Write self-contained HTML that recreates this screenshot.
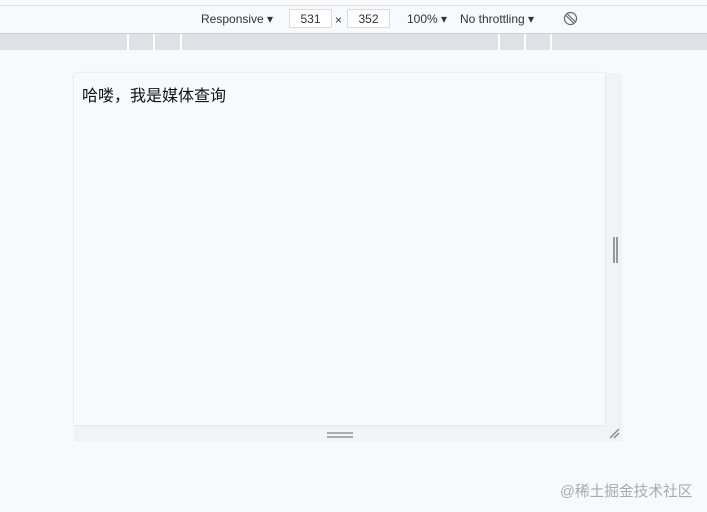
<!DOCTYPE html>
<html><head><meta charset="utf-8"><style>
body{margin:0;width:707px;height:512px;background:#f8f9fa;position:relative;overflow:hidden;font-family:"Liberation Sans","Noto Sans CJK SC",sans-serif}
.a{position:absolute}
.t{font-size:12px;color:#333;top:12px}
.inp{border:1px solid #dadce0;background:#fff;height:19px;top:9px;font-size:12px;color:#333;text-align:center;line-height:19px;box-sizing:border-box}
</style></head><body>
<div class="a" style="left:0;top:5px;width:707px;height:1px;background:#e3e3e3"></div>
<div class="a t" style="left:201px">Responsive ▾</div>
<div class="a inp" style="left:289px;width:43px">531</div>
<div class="a t" style="left:335px;top:13px">×</div>
<div class="a inp" style="left:347px;width:43px">352</div>
<div class="a t" style="left:407px">100% ▾</div>
<div class="a t" style="left:460px">No throttling ▾</div>
<svg class="a" style="left:563px;top:11px" width="15" height="15" viewBox="0 0 15 15"><circle cx="7.5" cy="7.5" r="6" fill="none" stroke="#666" stroke-width="1.2"/><path d="M3 4.5l7.5 7.5M4.5 3l7.5 7.5" stroke="#666" stroke-width="1.2"/></svg>
<div class="a" style="left:0;top:33px;width:707px;height:1px;background:#d0d0d0"></div>
<div class="a" style="left:0;top:34px;width:707px;height:16px;background:#dee1e6"></div>
<div class="a" style="left:127px;top:34px;width:2px;height:16px;background:#fff"></div>
<div class="a" style="left:153px;top:34px;width:2px;height:16px;background:#fff"></div>
<div class="a" style="left:180px;top:34px;width:2px;height:16px;background:#fff"></div>
<div class="a" style="left:498px;top:34px;width:2px;height:16px;background:#fff"></div>
<div class="a" style="left:524px;top:34px;width:2px;height:16px;background:#fff"></div>
<div class="a" style="left:550px;top:34px;width:2px;height:16px;background:#fff"></div>
<div class="a" style="left:605px;top:73px;width:17px;height:368px;background:#f1f3f4"></div>
<div class="a" style="left:74px;top:425px;width:548px;height:16px;background:#f1f3f4"></div>
<div class="a" style="left:74px;top:73px;width:531px;height:352px;background:#f8f9fa;box-shadow:0 0 2px rgba(0,0,0,.12)"></div>
<div class="a" style="left:82px;top:82px;font-size:16px;color:#111">哈喽，我是媒体查询</div>
<div class="a" style="left:613px;top:237px;width:1.5px;height:26px;background:#999"></div>
<div class="a" style="left:616px;top:237px;width:1.5px;height:26px;background:#999"></div>
<div class="a" style="left:327px;top:432px;width:26px;height:2px;background:#aaa"></div>
<div class="a" style="left:327px;top:436px;width:26px;height:2px;background:#aaa"></div>
<svg class="a" style="left:609px;top:428px" width="12" height="12"><path d="M1 10L10 1M5 10L10 5" stroke="#888" stroke-width="1.4"/></svg>
<div class="a" style="left:560px;top:480px;font-size:14.7px;color:#aaa">@稀土掘金技术社区</div>
</body></html>
